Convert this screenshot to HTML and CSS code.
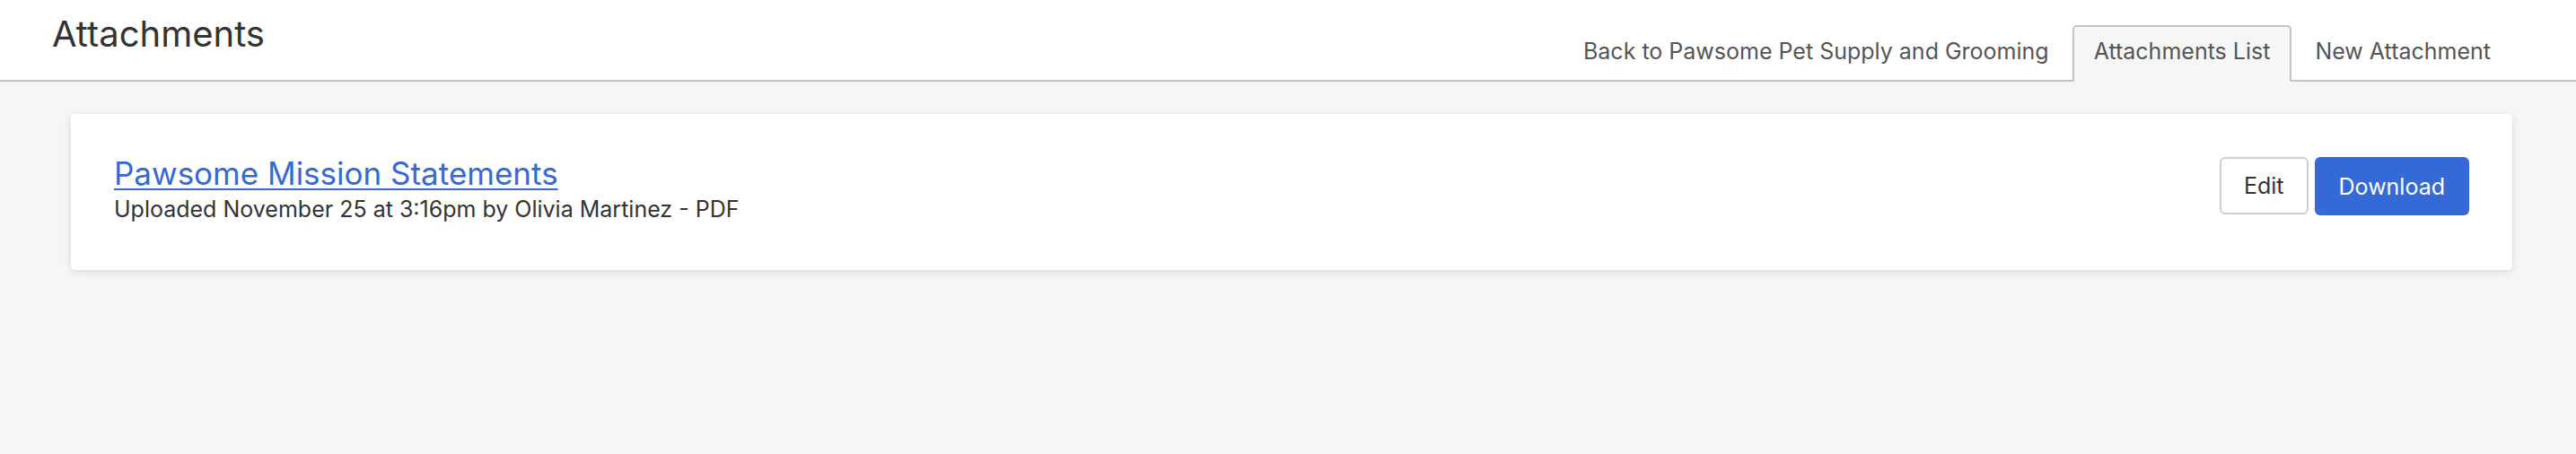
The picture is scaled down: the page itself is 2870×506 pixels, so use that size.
FILE: index.html
```html
<!DOCTYPE html>
<html lang="en">
<head>
    <meta charset="UTF-8">
    <meta name="viewport" content="width=device-width, initial-scale=1.0">
    <title>Attachments</title>
    <link rel="stylesheet" href="styles.css">
</head>
<body>
    <header class="page-header">
        <h1 class="page-title">Attachments</h1>
        <nav class="tabs">
            <a class="tab" href="#">Back to Pawsome Pet Supply and Grooming</a>
            <a class="tab active" href="#">Attachments List</a>
            <a class="tab" href="#">New Attachment</a>
        </nav>
    </header>

    <main class="content">
        <div class="attachment-card">
            <div class="attachment-info">
                <a class="attachment-name" href="#">Pawsome Mission Statements</a>
                <div class="attachment-meta">Uploaded November 25 at 3:16pm by Olivia Martinez - PDF</div>
            </div>
            <div class="attachment-actions">
                <button class="btn btn-edit">Edit</button>
                <button class="btn btn-download">Download</button>
            </div>
        </div>
    </main>
</body>
</html>
```

FILE: styles.css
```css
/* General */
body {
    margin: 0;
    font-family: Inter, "Noto Sans", sans-serif;
    background-color: #f6f6f6;
    color: #333;
    min-height: 100vh;
}

/* Header with tabs */
.page-header {
    display: flex;
    justify-content: space-between;
    align-items: flex-start;
    height: 89px;
    padding: 0 71px 0 58px;
    background-color: #fff;
    border-bottom: 2px solid #bdc6d0;
}

.page-title {
    margin: 0;
    padding-top: 14px;
    font-size: 40px;
    line-height: 48px;
    font-weight: 400;
    color: #333;
}

.tabs {
    display: flex;
    align-self: flex-end;
    gap: 2px;
    margin-bottom: -2px;
}

.tab {
    padding: 9px 22px 16px;
    font-size: 25px;
    line-height: 36px;
    color: #555;
    text-decoration: none;
    border: 2px solid transparent;
    border-bottom: none;
    border-radius: 5px 5px 0 0;
}

.tab.active {
    background-color: #f6f6f6;
    border-color: #bdc6d0;
}

/* Attachment card */
.content {
    padding: 36px 71px 0 79px;
}

.attachment-card {
    display: flex;
    justify-content: space-between;
    align-items: flex-start;
    padding: 48px 48px 46px 48px;
    background-color: #fff;
    border-radius: 5px;
    box-shadow: 0 2px 8px rgba(0, 0, 0, 0.13);
}

.attachment-info {
    display: flex;
    flex-direction: column;
}

.attachment-name {
    font-size: 35px;
    line-height: 36px;
    color: #3569d6;
    text-decoration: underline;
    text-decoration-thickness: 2px;
    text-underline-offset: 4px;
}

.attachment-meta {
    font-size: 25px;
    line-height: 44px;
    color: #333;
}

.attachment-actions {
    display: flex;
    gap: 7px;
}

.btn {
    height: 64px;
    padding: 0 25px;
    font-family: inherit;
    font-size: 25px;
    border-radius: 6px;
    cursor: pointer;
}

.btn-edit {
    background-color: #fff;
    color: #333;
    border: 2px solid #cfcfcf;
}

.btn-download {
    height: 65px;
    padding: 0 27px;
    background-color: #3569d6;
    color: #fff;
    border: none;
}
```
